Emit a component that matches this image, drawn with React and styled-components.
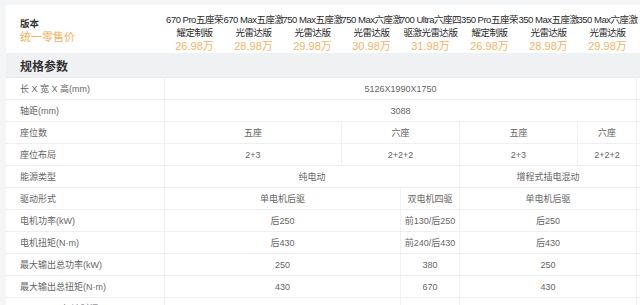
import React from "react";
import styled, { createGlobalStyle } from "styled-components";

const Global = createGlobalStyle`
  html, body { margin: 0; padding: 0; background: #f4f5f7; }
  body {
    font-family: "Liberation Sans", "Noto Sans CJK SC", sans-serif;
    -webkit-font-smoothing: antialiased;
  }
`;

const Page = styled.div`
  padding: 5px 0 0 6px;
  width: 634px;
  overflow: hidden;
`;

const Card = styled.div`
  background: #fff;
  width: 640px;
`;

const cols = "159px repeat(8, 59px)";

const HeaderRow = styled.div`
  display: grid;
  grid-template-columns: ${cols};
  height: 48px;
  background: #fff;
`;

const HeadLabel = styled.div`
  display: flex;
  flex-direction: column;
  justify-content: center;
  padding: 2px 0 0 14px;
  gap: 0;
`;

const HeadTitle = styled.div`
  font-size: 9.5px;
  line-height: 13px;
  color: #333;
  font-weight: 600;
`;

const HeadSub = styled.div`
  font-size: 11px;
  line-height: 14px;
  color: #f3b158;
`;

const Model = styled.div`
  display: flex;
  flex-direction: column;
  align-items: center;
  padding-top: 8px;
  white-space: nowrap;
  min-width: 0;
`;

const ModelName = styled.div`
  font-size: 9.5px;
  line-height: 13px;
  letter-spacing: -0.5px;
  color: #2a2a2a;
  text-align: center;
`;

const Price = styled.div`
  font-size: 11px;
  line-height: 14px;
  color: #f3b466;
`;

const Section = styled.div`
  height: 24px;
  background: #f0f1f3;
  display: flex;
  align-items: center;
  padding-left: 14px;
  font-size: 12px;
  font-weight: 700;
  color: #333;
  border-bottom: 1px solid #ebebeb;
`;

const Row = styled.div`
  display: grid;
  grid-template-columns: ${cols};
  height: 21px;
  border-bottom: 1px solid #efefef;
`;

const Label = styled.div`
  display: flex;
  align-items: center;
  padding-left: 14px;
  font-size: 9px;
  color: #666;
  border-right: 1px solid #efefef;
  white-space: nowrap;
`;

const Cell = styled.div`
  grid-column: span ${(p) => p.$span};
  display: flex;
  align-items: center;
  justify-content: center;
  font-size: 9px;
  color: #666;
  border-right: 1px solid #f1f1f1;
  white-space: nowrap;
`;

const models = [
  ["670 Pro五座荣", "耀定制版", "26.98万"],
  ["670 Max五座激", "光雷达版", "28.98万"],
  ["750 Max五座激", "光雷达版", "29.98万"],
  ["750 Max六座激", "光雷达版", "30.98万"],
  ["700 Ultra六座四", "驱激光雷达版", "31.98万"],
  ["350 Pro五座荣", "耀定制版", "26.98万"],
  ["350 Max五座激", "光雷达版", "28.98万"],
  ["350 Max六座激", "光雷达版", "29.98万"],
];

const rows = [
  ["长 X 宽 X 高(mm)", [["5126X1990X1750", 8]]],
  ["轴距(mm)", [["3088", 8]]],
  ["座位数", [["五座", 3], ["六座", 2], ["五座", 2], ["六座", 1]]],
  ["座位布局", [["2+3", 3], ["2+2+2", 2], ["2+3", 2], ["2+2+2", 1]]],
  ["能源类型", [["纯电动", 5], ["增程式插电混动", 3]]],
  ["驱动形式", [["单电机后驱", 4], ["双电机四驱", 1], ["单电机后驱", 3]]],
  ["电机功率(kW)", [["后250", 4], ["前130/后250", 1], ["后250", 3]]],
  ["电机扭矩(N·m)", [["后430", 4], ["前240/后430", 1], ["后430", 3]]],
  ["最大输出总功率(kW)", [["250", 4], ["380", 1], ["250", 3]]],
  ["最大输出总扭矩(N·m)", [["430", 4], ["670", 1], ["430", 3]]],
  ["0-100km/h加速时间(s)", [["6.9", 4], ["4.9", 1], ["6.9", 3]]],
];

export default function App() {
  return (
    <>
      <Global />
      <Page>
        <Card>
          <HeaderRow>
            <HeadLabel>
              <HeadTitle>版本</HeadTitle>
              <HeadSub>统一零售价</HeadSub>
            </HeadLabel>
            {models.map((m, i) => (
              <Model key={i}>
                <ModelName>{m[0]}</ModelName>
                <ModelName>{m[1]}</ModelName>
                <Price>{m[2]}</Price>
              </Model>
            ))}
          </HeaderRow>
          <Section>规格参数</Section>
          {rows.map(([label, cells], i) => (
            <Row key={i}>
              <Label>{label}</Label>
              {cells.map(([v, s], j) => (
                <Cell key={j} $span={s}>
                  {v}
                </Cell>
              ))}
            </Row>
          ))}
        </Card>
      </Page>
    </>
  );
}
